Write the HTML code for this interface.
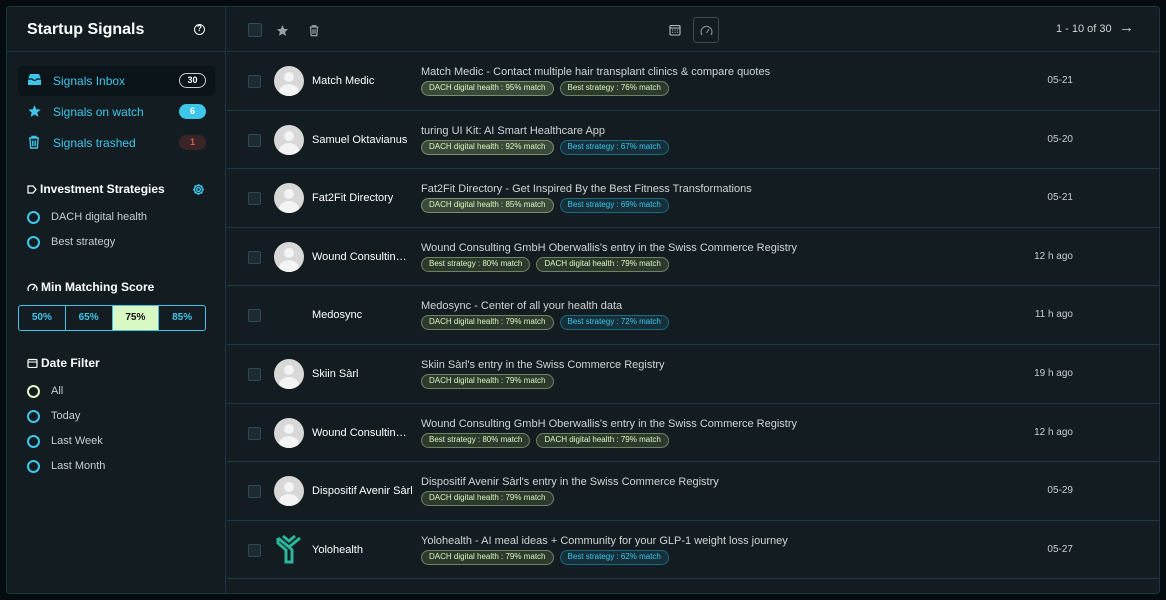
<!DOCTYPE html>
<html><head><meta charset="utf-8"><style>
*{box-sizing:border-box;margin:0;padding:0}
body{width:1166px;height:600px;background:#050c10;font-family:"Liberation Sans",Arial,sans-serif;overflow:hidden;position:relative}
.panel{position:absolute;left:6px;top:6px;width:1154px;height:588px;background:#131d21;border:1px solid #1b3640;border-radius:4px;overflow:hidden}
.side{position:absolute;left:0;top:0;width:219px;height:100%;border-right:1px solid #1b3640}
.sh{height:45px;border-bottom:1px solid #1b3640;position:relative}
.sh h1{position:absolute;left:20px;top:14px;font-size:16px;color:#fff;font-weight:bold}
.help{position:absolute;left:187px;top:17px;width:11px;height:11px;border:1.5px solid #fff;border-radius:50%;font-size:8px;color:#fff;text-align:center;line-height:8px;font-weight:bold}
.nav{position:absolute;left:11px;height:30px;width:197px;border-radius:4px;color:#3ec6ea;font-size:12px}
.nav span.t{position:absolute;left:35px;top:8px}
.nav svg{position:absolute;left:9px;top:7px}
.badge{position:absolute;left:161px;top:7px;width:27px;height:15px;border-radius:8px;font-size:9px;text-align:center;line-height:13px;font-weight:bold}
.sec{position:absolute;left:20px;color:#fff;font-weight:bold;font-size:12px}
.sec svg{vertical-align:-1px;margin-right:3px}
.radio{position:absolute;left:20px;font-size:11px;color:#c8cdd0}
.radio i{position:absolute;left:0;top:0;width:13px;height:13px;border:2px solid #3ec6ea;border-radius:50%}
.radio span{position:absolute;left:24px;top:0;white-space:nowrap}
.seg{position:absolute;left:11px;top:298px;width:188px;height:26px;border:1px solid #3ec6ea;border-radius:3px;display:flex;overflow:hidden}
.seg div{flex:1;border-right:1px solid #3ec6ea;text-align:center;line-height:24px;font-size:10px;font-weight:bold;color:#3ec6ea}
.seg div:last-child{border-right:none}
.main{position:absolute;left:220px;top:0;right:0;height:100%}
.mh{height:45px;border-bottom:1px solid #1b3640;position:relative}
.cb{position:absolute;width:13px;height:13px;border:1.5px solid #2f4b55;border-radius:2px;background:#1d2b31}
.row{height:58.6px;border-bottom:1.3px solid #1b3a45;position:relative}
.av{position:absolute;left:47px;top:14px;width:30px;height:30px;border-radius:50%;background:#d8d8d8;overflow:hidden}
.av:before{content:"";position:absolute;left:10px;top:6px;width:10px;height:10px;border-radius:50%;background:#f4f4f4}
.av:after{content:"";position:absolute;left:5px;top:18px;width:20px;height:16px;border-radius:50%;background:#f4f4f4}
.nm{position:absolute;left:85px;top:23px;font-size:11px;color:#fff;white-space:nowrap;max-width:100px;overflow:hidden;text-overflow:ellipsis}
.ti{position:absolute;left:194px;top:14px;font-size:11px;color:#d0d4d6;white-space:nowrap}
.pills{position:absolute;left:194px;top:29px;display:flex;gap:6px}
.p{height:15px;border-radius:8px;font-size:8px;padding:0 7px;line-height:12px;white-space:nowrap}
.g{background:#3a4a3a;border:1.5px solid #7b8f6c;color:#dcf7bf}
.g2{background:#2c3a2e;border:1px solid #6f8463;color:#dcf7bf}
.b{background:#15303a;border:1px solid #1f6a80;color:#3ec6ea}
.dt{position:absolute;right:86px;top:23px;font-size:10px;color:#c8cdd0;text-align:right}
</style></head><body>
<div class="panel">
<div class="side">
 <div class="sh"><h1>Startup Signals</h1><div class="help">?</div></div>
 <div class="nav" style="top:59px;background:#0b1519"><svg width="15" height="13" viewBox="0 0 15 13"><path d="M1 6 L3 1 H12 L14 6 V12 H1Z" fill="#3ec6ea"/><path d="M1 6 H5 Q7.5 9 10 6 H14" stroke="#0b1519" stroke-width="1.3" fill="none"/></svg><span class="t">Signals Inbox</span><span class="badge" style="border:1px solid #c8cdd0;color:#fff;background:#0b1519">30</span></div>
 <div class="nav" style="top:90px"><svg width="15" height="14" viewBox="0 0 24 24"><path d="M12 2l3 7 7.5.6-5.7 5 1.8 7.4L12 18l-6.6 4 1.8-7.4-5.7-5L9 9z" fill="#3ec6ea"/></svg><span class="t">Signals on watch</span><span class="badge" style="background:#3ec6ea;color:#fff;line-height:15px">6</span></div>
 <div class="nav" style="top:121px"><svg width="14" height="14" viewBox="0 0 14 14"><path d="M2 3H12M5 3V1.5H9V3M3 3.5 L3.7 13 H10.3 L11 3.5M5.8 5.5V11M8.2 5.5V11" stroke="#3ec6ea" stroke-width="1.4" fill="none"/></svg><span class="t">Signals trashed</span><span class="badge" style="background:#3a2426;color:#d45a5a;line-height:15px">1</span></div>
 <div class="sec" style="top:175px"><svg width="10" height="9" viewBox="0 0 10 9"><path d="M1 1H6L9 4.5 6 8H1Z" stroke="#fff" stroke-width="1.2" fill="none"/></svg>Investment Strategies</div>
 <svg style="position:absolute;left:185px;top:176px" width="13" height="13" viewBox="0 0 24 24"><circle cx="12" cy="12" r="3.5" stroke="#3ec6ea" stroke-width="2.5" fill="none"/><path d="M12 2v3M12 19v3M2 12h3M19 12h3M5 5l2 2M17 17l2 2M5 19l2-2M17 7l2-2" stroke="#3ec6ea" stroke-width="3"/><circle cx="12" cy="12" r="7.5" stroke="#3ec6ea" stroke-width="2.5" fill="none"/></svg>
 <div class="radio" style="top:204px"><i></i><span>DACH digital health</span></div>
 <div class="radio" style="top:229px"><i></i><span>Best strategy</span></div>
 <div class="sec" style="top:273px"><svg width="11" height="9" viewBox="0 0 11 9"><path d="M1.5 8A4.5 4.5 0 1 1 9.5 8" stroke="#fff" stroke-width="1.3" fill="none"/><path d="M5.5 7L8 3.5" stroke="#fff" stroke-width="1.3"/></svg>Min Matching Score</div>
 <div class="seg"><div>50%</div><div>65%</div><div style="background:#d8f9c4;color:#111">75%</div><div>85%</div></div>
 <div class="sec" style="top:349px"><svg width="11" height="10" viewBox="0 0 11 10"><rect x="1" y="1.5" width="9" height="8" rx="1" stroke="#fff" stroke-width="1.2" fill="none"/><path d="M1 4H10" stroke="#fff"/></svg>Date Filter</div>
 <div class="radio" style="top:378px"><i style="border-color:#dcf7bf"></i><span>All</span></div>
 <div class="radio" style="top:403px"><i></i><span>Today</span></div>
 <div class="radio" style="top:428px"><i></i><span>Last Week</span></div>
 <div class="radio" style="top:453px"><i></i><span>Last Month</span></div>
</div>
<div class="main">
 <div class="mh">
  <div class="cb" style="left:21px;top:16px;width:14px;height:14px"></div>
  <svg style="position:absolute;left:49px;top:17px" width="13" height="13" viewBox="0 0 24 24"><path d="M12 2l3 7 7.5.6-5.7 5 1.8 7.4L12 18l-6.6 4 1.8-7.4-5.7-5L9 9z" fill="#9aa4a8"/></svg>
  <svg style="position:absolute;left:81px;top:17px" width="12" height="13" viewBox="0 0 14 14"><path d="M2 3H12M5 3V1.5H9V3M3 3.5 L3.7 13 H10.3 L11 3.5M5.8 5.5V11M8.2 5.5V11" stroke="#9aa4a8" stroke-width="1.4" fill="none"/></svg>
  <svg style="position:absolute;left:442px;top:17px" width="12" height="12" viewBox="0 0 12 12"><rect x="1" y="1.5" width="10" height="9.5" rx="1" stroke="#b8c0c4" stroke-width="1.1" fill="none"/><path d="M1 4H11" stroke="#b8c0c4"/><path d="M3 6h1M5.5 6h1M8 6h1M3 8.3h1M5.5 8.3h1M8 8.3h1" stroke="#b8c0c4"/></svg>
  <div style="position:absolute;left:466px;top:10px;width:26px;height:26px;border:1px solid #3a4a50;border-radius:3px"><svg style="position:absolute;left:6px;top:7px" width="13" height="11" viewBox="0 0 13 11"><path d="M2 10A5.5 5.5 0 1 1 11 10" stroke="#8a9499" stroke-width="1.1" fill="none"/><path d="M6.5 8L9 4" stroke="#8a9499" stroke-width="1.1"/></svg></div>
  <div style="position:absolute;left:829px;top:16px;font-size:11px;color:#d0d4d6">1 - 10 of 30</div>
  <div style="position:absolute;left:892px;top:12px;font-size:15px;color:#d0d4d6">→</div>
 </div>
 <div class="row"><div class="cb" style="left:21px;top:23px"></div><div class="av"></div><div class="nm">Match Medic</div><div class="ti">Match Medic - Contact multiple hair transplant clinics &amp; compare quotes</div><div class="pills"><div class="p g">DACH digital health : 95% match</div><div class="p g2">Best strategy : 76% match</div></div><div class="dt">05-21</div></div>
 <div class="row"><div class="cb" style="left:21px;top:23px"></div><div class="av"></div><div class="nm">Samuel Oktavianus</div><div class="ti">turing UI Kit: AI Smart Healthcare App</div><div class="pills"><div class="p g">DACH digital health : 92% match</div><div class="p b">Best strategy : 67% match</div></div><div class="dt">05-20</div></div>
 <div class="row"><div class="cb" style="left:21px;top:23px"></div><div class="av"></div><div class="nm">Fat2Fit Directory</div><div class="ti">Fat2Fit Directory - Get Inspired By the Best Fitness Transformations</div><div class="pills"><div class="p g">DACH digital health : 85% match</div><div class="p b">Best strategy : 69% match</div></div><div class="dt">05-21</div></div>
 <div class="row"><div class="cb" style="left:21px;top:23px"></div><div class="av"></div><div class="nm">Wound Consulting GmbH</div><div class="ti">Wound Consulting GmbH Oberwallis's entry in the Swiss Commerce Registry</div><div class="pills"><div class="p g2">Best strategy : 80% match</div><div class="p g2">DACH digital health : 79% match</div></div><div class="dt">12 h ago</div></div>
 <div class="row"><div class="cb" style="left:21px;top:23px"></div><div class="nm">Medosync</div><div class="ti">Medosync - Center of all your health data</div><div class="pills"><div class="p g2">DACH digital health : 79% match</div><div class="p b">Best strategy : 72% match</div></div><div class="dt">11 h ago</div></div>
 <div class="row"><div class="cb" style="left:21px;top:23px"></div><div class="av"></div><div class="nm">Skiin Sàrl</div><div class="ti">Skiin Sàrl's entry in the Swiss Commerce Registry</div><div class="pills"><div class="p g2">DACH digital health : 79% match</div></div><div class="dt">19 h ago</div></div>
 <div class="row"><div class="cb" style="left:21px;top:23px"></div><div class="av"></div><div class="nm">Wound Consulting GmbH</div><div class="ti">Wound Consulting GmbH Oberwallis's entry in the Swiss Commerce Registry</div><div class="pills"><div class="p g2">Best strategy : 80% match</div><div class="p g2">DACH digital health : 79% match</div></div><div class="dt">12 h ago</div></div>
 <div class="row"><div class="cb" style="left:21px;top:23px"></div><div class="av"></div><div class="nm" style="max-width:110px">Dispositif Avenir Sàrl</div><div class="ti">Dispositif Avenir Sàrl's entry in the Swiss Commerce Registry</div><div class="pills"><div class="p g2">DACH digital health : 79% match</div></div><div class="dt">05-29</div></div>
 <div class="row"><div class="cb" style="left:21px;top:23px"></div><svg style="position:absolute;left:48px;top:13px" width="28" height="32" viewBox="0 0 28 32"><path d="M3 4 L14 13 L25 4" stroke="#2bb59a" stroke-width="3" fill="none"/><path d="M8 2 L14 7 L20 2" stroke="#2bb59a" stroke-width="3" fill="none"/><path d="M3 4 L3 9 L11 16 V28 H17 V16 L14 13" stroke="#2bb59a" stroke-width="3" fill="none"/></svg><div class="nm">Yolohealth</div><div class="ti">Yolohealth - AI meal ideas + Community for your GLP-1 weight loss journey</div><div class="pills"><div class="p g2">DACH digital health : 79% match</div><div class="p b">Best strategy : 62% match</div></div><div class="dt">05-27</div></div>
</div>
</div>
</body></html>
